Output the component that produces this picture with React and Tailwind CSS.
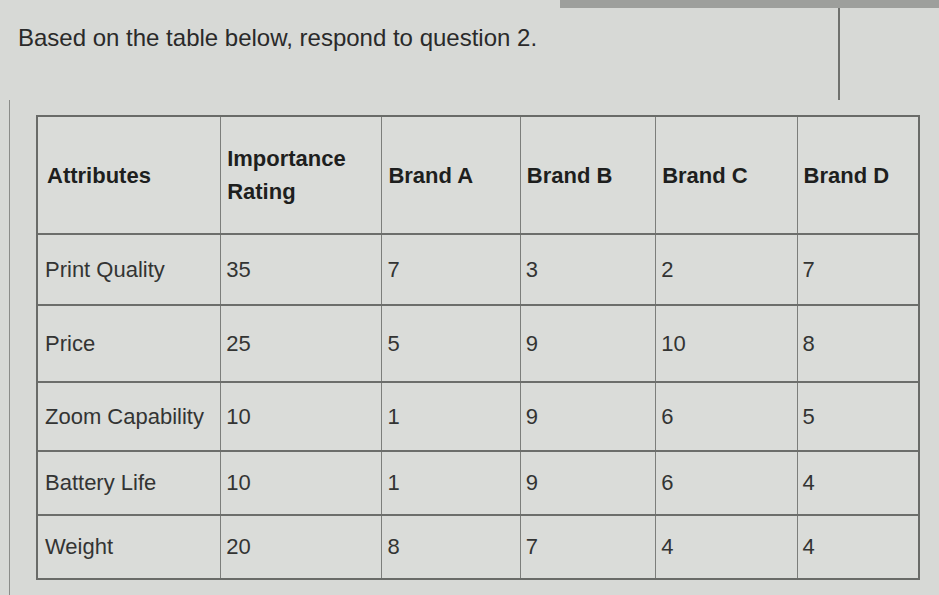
import React from 'react'

const headers = ['Attributes', 'Importance Rating', 'Brand A', 'Brand B', 'Brand C', 'Brand D']

const widths = ['w-[183px]', 'w-[162px]', 'w-[139px]', 'w-[136px]', 'w-[142px]', 'w-[122px]']

const rows = [
    { h: 'h-[71px]', cells: ['Print Quality', '35', '7', '3', '2', '7'] },
    { h: 'h-[77px]', cells: ['Price', '25', '5', '9', '10', '8'] },
    { h: 'h-[69px]', cells: ['Zoom Capability', '10', '1', '9', '6', '5'] },
    { h: 'h-[64px]', cells: ['Battery Life', '10', '1', '9', '6', '4'] },
    { h: 'h-[64px]', cells: ['Weight', '20', '8', '7', '4', '4'] },
]

const App = () => {
    return (
        <div className="w-[939px] h-[595px] overflow-hidden bg-[#d7d9d6] text-[#2c2d2c] font-['Liberation_Sans',Arial,sans-serif]">

            <div className="flex h-[8px]">
                <div className="w-[560px]" />
                <div className="flex-1 bg-[#9d9f9c]" />
            </div>

            <div className="flex h-[92px]">
                <div className="w-[840px] border-r-2 border-[#6f716e] pl-[18px] pt-[16px] text-[24px] leading-[28px] text-[#2a2a2a]">
                    Based on the table below, respond to question 2.
                </div>
                <div className="flex-1" />
            </div>

            <div className="flex h-[495px]">
                <div className="w-[10px] border-r border-[#8a8c89]" />

                <div className="pl-[26px] pt-[15px]">
                    <div className="w-[884px] border-2 border-[#696b68] bg-[#dadcd9]">

                        <div className="flex h-[116px]">
                            {headers.map((title, i) => (
                                <div
                                    key={title}
                                    className={`${widths[i]} flex items-center ${i === 0 ? 'pl-[9px]' : 'pl-[6px] border-l border-[#7c7e7b]'} pr-[8px] text-[22px] leading-[33px] font-bold text-[#1e1f1e]`}
                                >
                                    {title}
                                </div>
                            ))}
                        </div>

                        {rows.map(row => (
                            <div key={row.cells[0]} className={`flex ${row.h} border-t-2 border-[#6c6e6b]`}>
                                {row.cells.map((val, i) => (
                                    <div
                                        key={i}
                                        className={`${widths[i]} flex items-center ${i === 0 ? 'pl-[7px]' : 'pl-[5px] border-l border-[#7c7e7b]'} text-[22px] leading-[28px] text-[#333433]`}
                                    >
                                        {val}
                                    </div>
                                ))}
                            </div>
                        ))}
                    </div>
                </div>
            </div>
        </div>
    )
}

export default App
